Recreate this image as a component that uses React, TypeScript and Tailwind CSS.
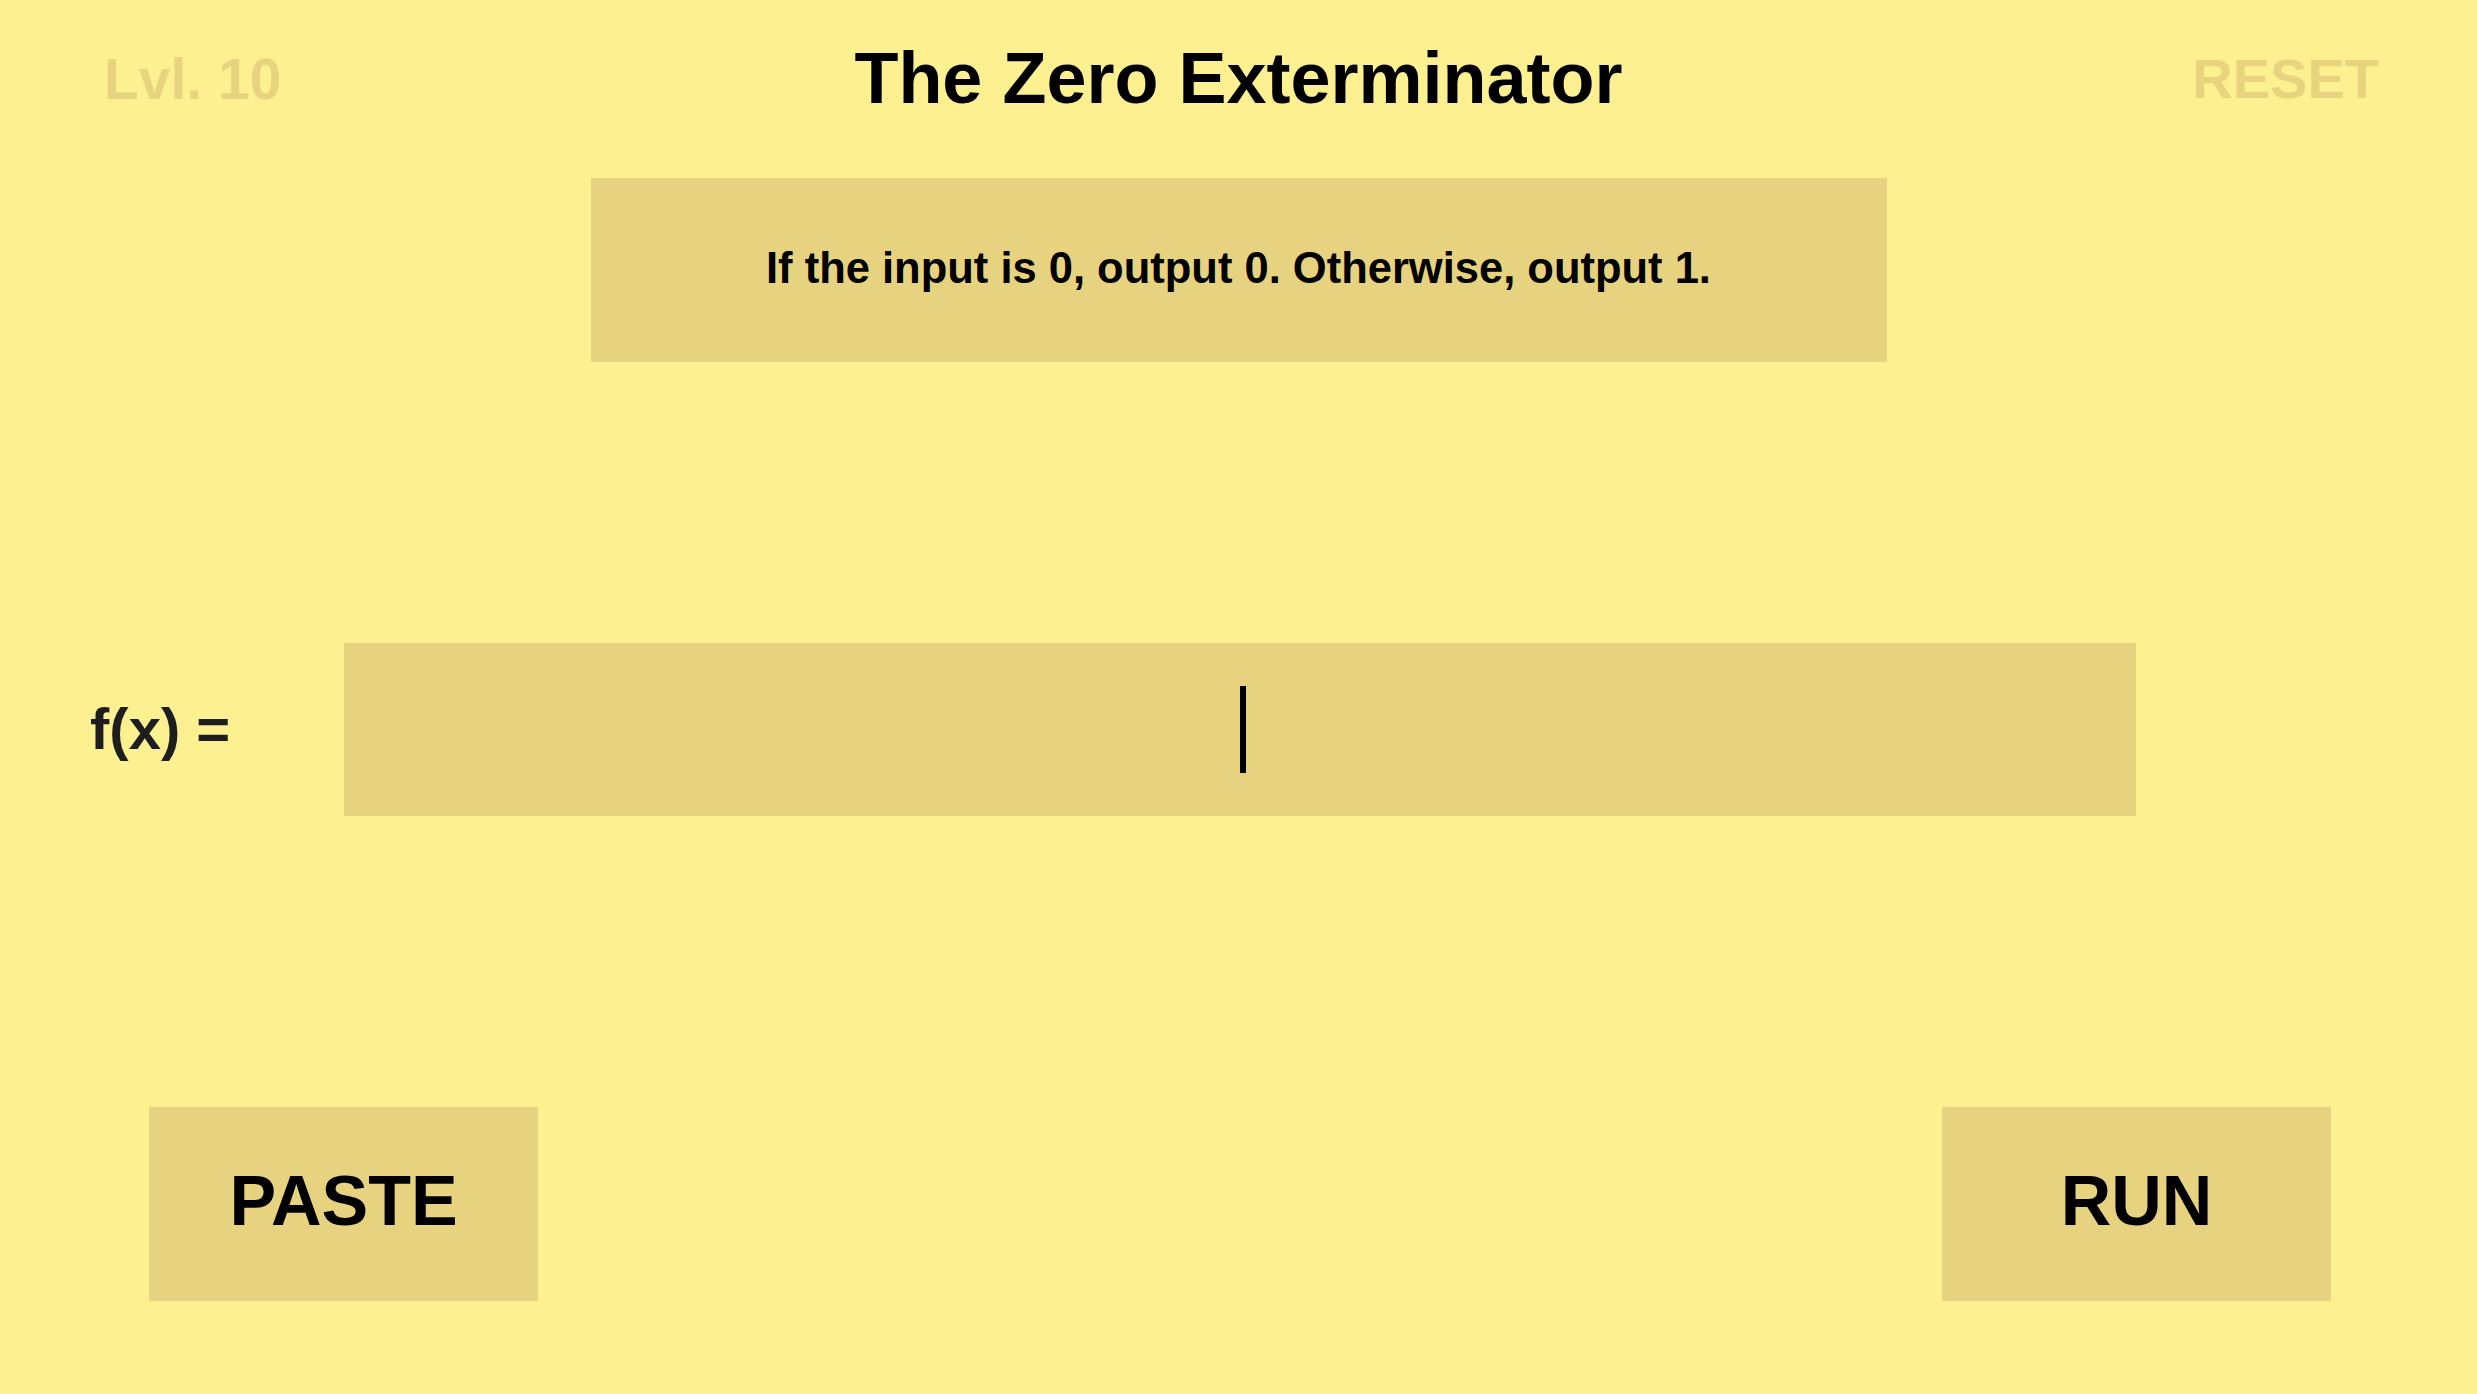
export default function App() {
  return (
    <div className="w-full h-[1394px] bg-[#fcf091] flex flex-col font-['Liberation_Sans',Arial,sans-serif] overflow-hidden">
      {/* Header */}
      <div className="grid grid-cols-[1fr_auto_1fr] items-start pt-[42px]">
        <div className="pl-[104px] mt-[9px] text-[57px] leading-none font-bold text-[#e8d37e]">
          Lvl. 10
        </div>
        <h1 className="text-[72px] leading-none font-bold text-black">
          The Zero Exterminator
        </h1>
        <div className="justify-self-end pr-[98px] mt-[9px] text-[56px] leading-none font-bold text-[#e8d37e]">
          RESET
        </div>
      </div>

      {/* Task description */}
      <div className="mt-[64px] mx-auto w-[1296px] h-[184px] bg-[#e7d37f] flex items-center justify-center">
        <p className="text-[43.5px] font-bold text-black leading-none pb-[2px]">
          If the input is 0, output 0. Otherwise, output 1.
        </p>
      </div>

      {/* Function input */}
      <div className="mt-[281px] flex items-center">
        <div className="w-[344px] pl-[90px] pb-[2px] text-[58px] leading-none font-bold text-[#1e1e1e]">
          f(x) =
        </div>
        <div className="w-[1792px] h-[173px] bg-[#e7d37f] flex items-center justify-center">
          <div className="ml-[6px] w-[6px] h-[87px] bg-black" />
        </div>
      </div>

      {/* Actions */}
      <div className="mt-[291px] flex justify-between pl-[149px] pr-[146px]">
        <button className="w-[389px] h-[194px] bg-[#e7d37f] flex items-center justify-center pb-[6px] text-[70px] leading-none font-bold text-black">
          PASTE
        </button>
        <button className="w-[389px] h-[194px] bg-[#e7d37f] flex items-center justify-center pb-[6px] text-[70px] leading-none font-bold text-black">
          RUN
        </button>
      </div>
    </div>
  );
}
